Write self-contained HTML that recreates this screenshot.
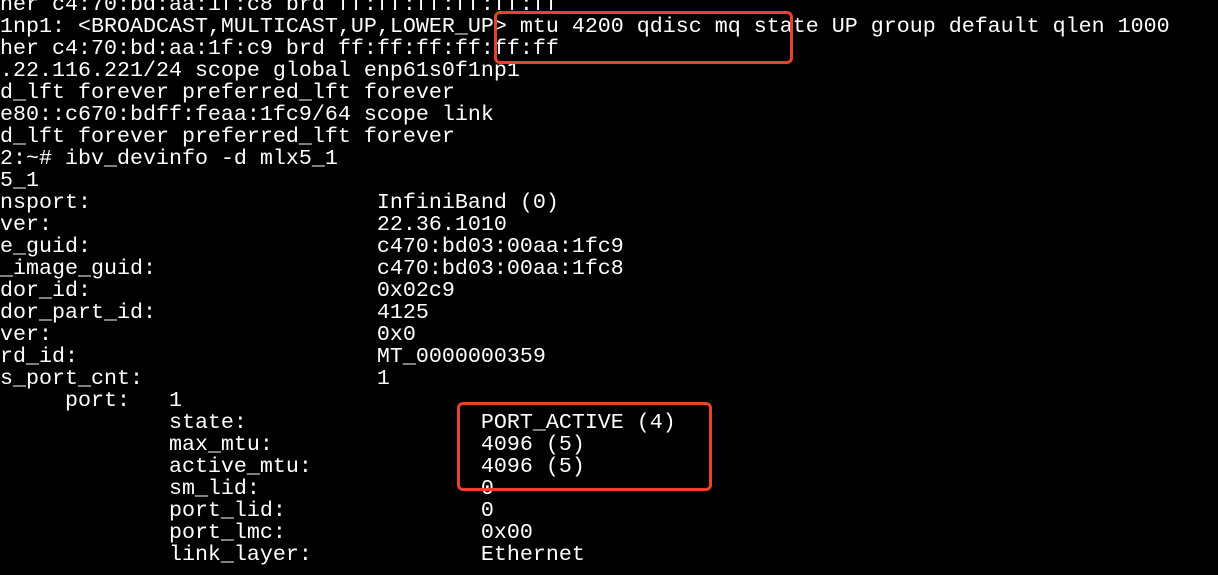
<!DOCTYPE html>
<html><head><meta charset="utf-8"><style>
html,body{margin:0;padding:0;background:#000;width:1218px;height:575px;overflow:hidden}
pre{position:absolute;left:0;top:-6px;margin:0;font-family:"Liberation Mono",monospace;font-size:21.67px;line-height:22px;color:#fff;white-space:pre}
.box{position:absolute;border:3px solid #e8412c;border-radius:6px;box-sizing:border-box}
</style></head><body>
<pre>her c4:70:bd:aa:1f:c8 brd ff:ff:ff:ff:ff:ff
1np1: &lt;BROADCAST,MULTICAST,UP,LOWER_UP&gt; mtu 4200 qdisc mq state UP group default qlen 1000
her c4:70:bd:aa:1f:c9 brd ff:ff:ff:ff:ff:ff
.22.116.221/24 scope global enp61s0f1np1
d_lft forever preferred_lft forever
e80::c670:bdff:feaa:1fc9/64 scope link
d_lft forever preferred_lft forever
2:~# ibv_devinfo -d mlx5_1
5_1
nsport:                      InfiniBand (0)
ver:                         22.36.1010
e_guid:                      c470:bd03:00aa:1fc9
_image_guid:                 c470:bd03:00aa:1fc8
dor_id:                      0x02c9
dor_part_id:                 4125
ver:                         0x0
rd_id:                       MT_0000000359
s_port_cnt:                  1
     port:   1
             state:                  PORT_ACTIVE (4)
             max_mtu:                4096 (5)
             active_mtu:             4096 (5)
             sm_lid:                 0
             port_lid:               0
             port_lmc:               0x00
             link_layer:             Ethernet</pre>
<div class="box" style="left:494px;top:11px;width:299px;height:53px"></div>
<div class="box" style="left:457px;top:402px;width:255px;height:89px"></div>
</body></html>
